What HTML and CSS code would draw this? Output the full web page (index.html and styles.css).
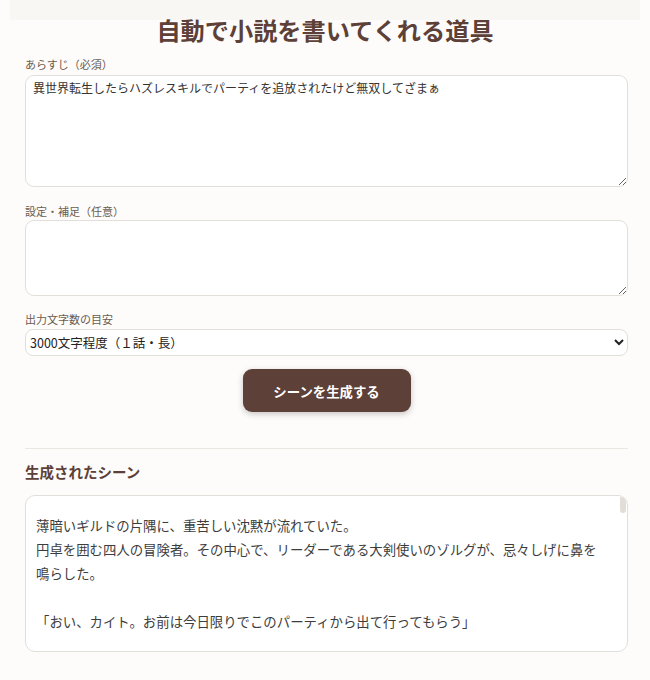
FILE: index.html
```html
<!DOCTYPE html>
<html lang="ja">
<head>
<meta charset="utf-8">
<title>自動で小説を書いてくれる道具</title>
<link rel="stylesheet" href="styles.css">
</head>
<body>
<header class="topbar">
  <h1 class="title">自動で小説を書いてくれる道具</h1>
</header>
<main class="container">
  <div class="field first">
    <label class="label">あらすじ（必須）</label>
    <textarea class="input tall">異世界転生したらハズレスキルでパーティを追放されたけど無双してざまぁ</textarea>
  </div>
  <div class="field">
    <label class="label">設定・補足（任意）</label>
    <textarea class="input short"></textarea>
  </div>
  <div class="field select-field">
    <label class="label">出力文字数の目安</label>
    <select class="select">
      <option>3000文字程度（１話・長）</option>
    </select>
  </div>
  <div class="actions">
    <button class="btn">シーンを生成する</button>
  </div>
  <hr class="divider">
  <h2 class="result-title">生成されたシーン</h2>
  <div class="output">
    <span class="scroll-thumb"></span>
    <div class="output-text">薄暗いギルドの片隅に、重苦しい沈黙が流れていた。
円卓を囲む四人の冒険者。その中心で、リーダーである大剣使いのゾルグが、忌々しげに鼻を鳴らした。

「おい、カイト。お前は今日限りでこのパーティから出て行ってもらう」</div>
  </div>
</main>
</body>
</html>
```

FILE: styles.css
```css
html, body {
  margin: 0;
  padding: 0;
}

body {
  background: #fdfcfa;
  font-family: "Noto Sans CJK JP", "Noto Sans", sans-serif;
  color: #333;
}

.topbar {
  margin: 0 10px;
  padding-top: 12px;
  background: linear-gradient(#f8f7f4 0, #f8f7f4 20px, transparent 20px);
}

.title {
  margin: 0;
  font-size: 24.2px;
  line-height: 36px;
  font-weight: 700;
  color: #5d4037;
  text-align: center;
}

.container {
  padding: 0 22px 0 25px;
}

.field {
  display: flex;
  flex-direction: column;
  margin-top: 16px;
}

.field.first {
  margin-top: 8px;
}

.field.select-field {
  margin-top: 15px;
}

.label {
  font-size: 11px;
  line-height: 16px;
  color: #6b5b50;
  margin-bottom: 2px;
}

.input {
  display: block;
  box-sizing: border-box;
  width: 100%;
  margin: 0;
  border: 1px solid #e2dfdb;
  border-radius: 9px;
  background: #fff;
  font-family: "Noto Sans CJK JP", sans-serif;
  font-size: 12px;
  line-height: 17px;
  color: #333;
  padding: 3px 7px;
  resize: vertical;
}

.field.first .input {
  margin-top: 1px;
}

.input.tall {
  height: 112px;
}

.input.short {
  height: 76px;
  margin-top: -1px;
}

.select {
  display: block;
  box-sizing: border-box;
  width: 100%;
  height: 27px;
  margin: 0;
  border: 1px solid #e2dfdb;
  border-radius: 8px;
  background: #fff;
  font-family: "Noto Sans CJK JP", sans-serif;
  font-size: 12.5px;
  color: #222;
  padding: 0;
}

.actions {
  display: flex;
  justify-content: center;
  margin-top: 13px;
}

.btn {
  width: 168px;
  height: 43px;
  border: none;
  border-radius: 9px;
  background: #5d4037;
  color: #fff;
  font-family: "Noto Sans CJK JP", sans-serif;
  font-size: 13.4px;
  font-weight: 700;
  box-shadow: 0 2px 6px rgba(0, 0, 0, 0.22);
  cursor: pointer;
}

.divider {
  margin: 36px 0 0;
  border: none;
  border-top: 1px solid #ebe8e4;
  height: 0;
}

.result-title {
  margin: 13px 0 0;
  font-size: 14.5px;
  line-height: 20px;
  font-weight: 700;
  color: #5d4037;
}

.output {
  position: relative;
  box-sizing: border-box;
  margin-top: 13px;
  height: 157px;
  overflow: hidden;
  border: 1px solid #e2dfdb;
  border-radius: 10px;
  background: #fff;
  padding: 17px 20px 17px 10px;
}

.output-text {
  font-size: 13.4px;
  line-height: 24px;
  color: #3d3d3d;
  white-space: pre-wrap;
}

.scroll-thumb {
  position: absolute;
  top: 0;
  right: 1px;
  width: 6px;
  height: 17px;
  border-radius: 3px;
  background: #e1ddd7;
}
```
